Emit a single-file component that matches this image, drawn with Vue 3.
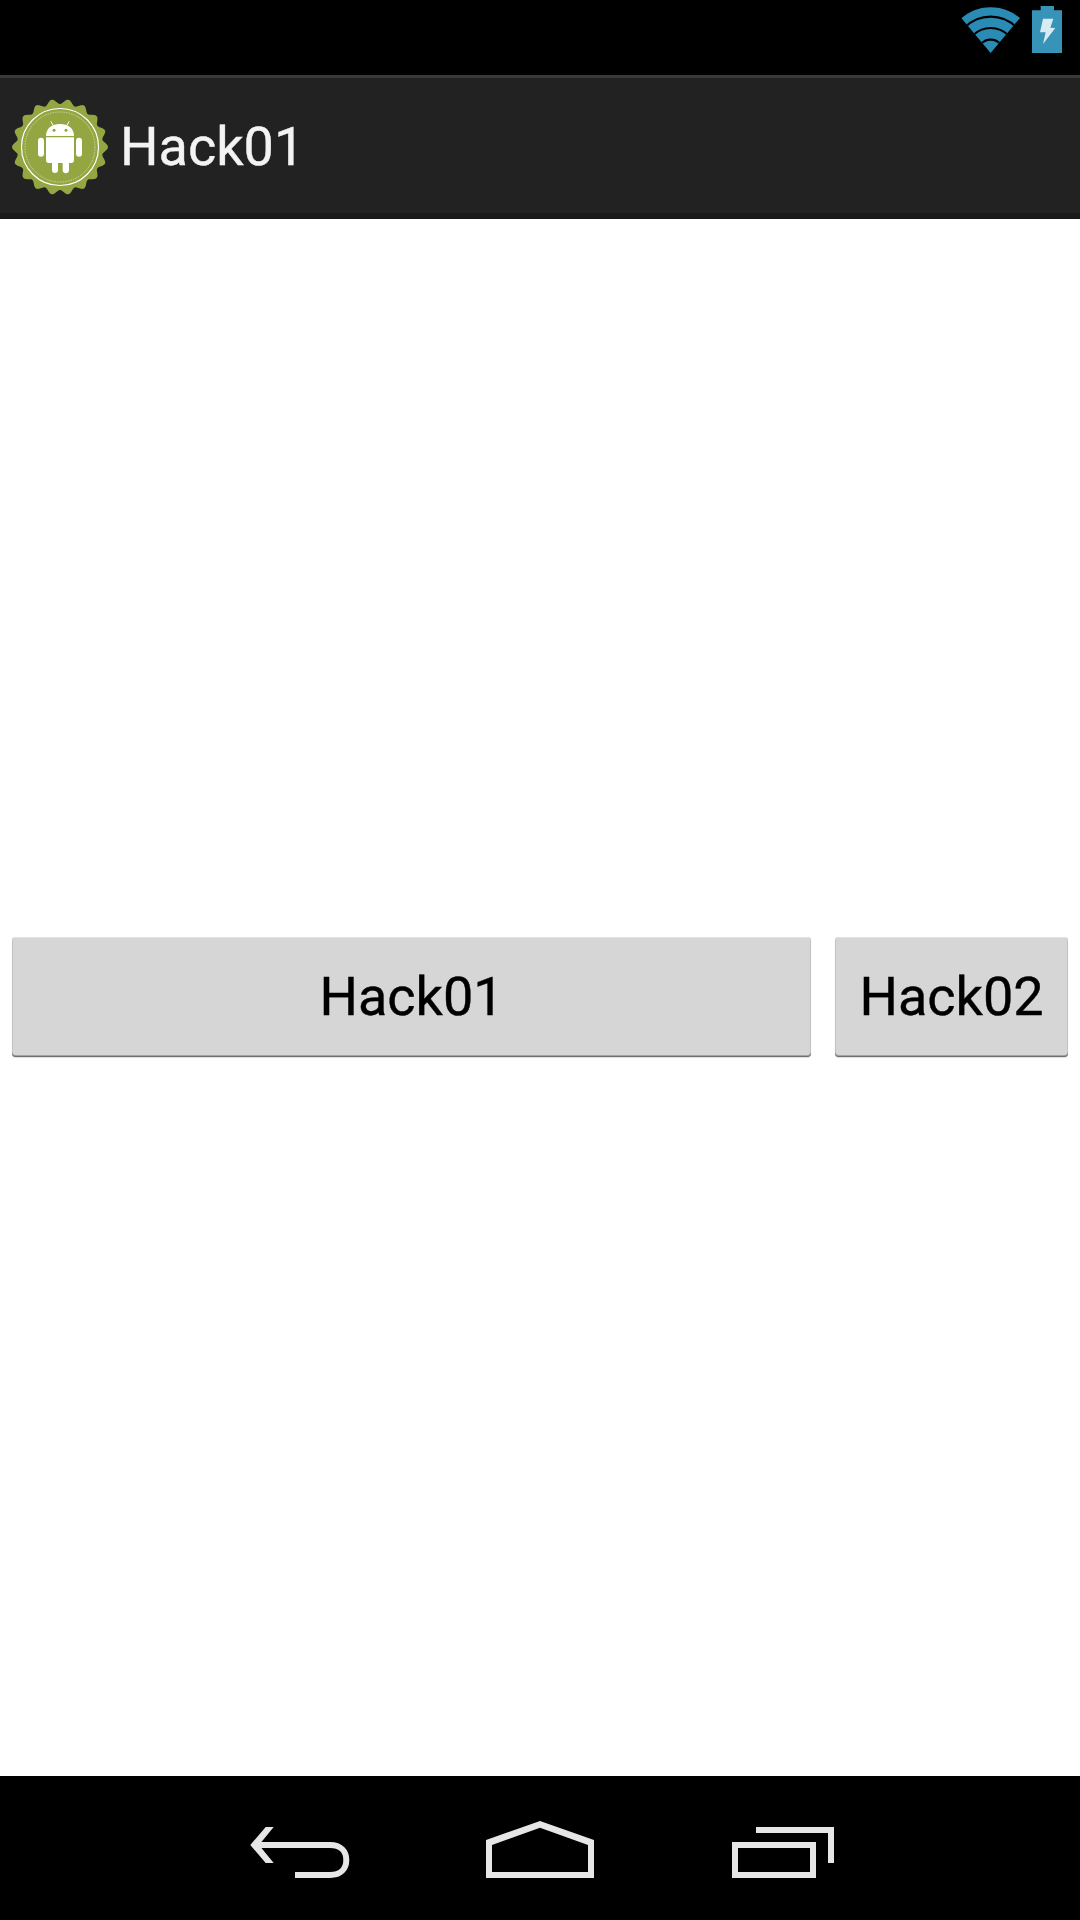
<script setup>
import { ref } from 'vue'

const title = ref('Hack01')
const buttons = [
  { label: 'Hack01', wide: true },
  { label: 'Hack02', wide: false },
]

// Scalloped edge of the launcher badge: 18 teeth around (144, 144)
const teeth = 18
const steps = teeth * 12
const badge =
  Array.from({ length: steps }, (_, i) => {
    const a = (i / steps) * Math.PI * 2
    const r = 136.5 + 7.5 * Math.cos(teeth * a)
    return `${i ? 'L' : 'M'}${(144 + r * Math.cos(a)).toFixed(2)} ${(144 + r * Math.sin(a)).toFixed(2)}`
  }).join('') + 'Z'
</script>

<template>
  <div class="screen">
    <header class="status">
      <svg class="wifi" viewBox="-2 0 180 138" width="60" height="46">
        <defs>
          <clipPath id="fan"><path d="M90 138L-8 21V0H188V21Z" /></clipPath>
        </defs>
        <g clip-path="url(#fan)">
          <circle cx="90" cy="138" r="137" fill="#2a8cb5" />
          <g fill="none" stroke="#000" stroke-width="6.5">
            <circle cx="90" cy="138" r="109" />
            <circle cx="90" cy="138" r="75" />
            <circle cx="90" cy="138" r="40" />
          </g>
        </g>
      </svg>
      <svg class="battery" viewBox="0 0 90 141" width="30" height="47">
        <path d="M26 0H66V13H90V141H0V13H26Z" fill="#3793b8" />
        <path d="M33 38H64L55 65L70 66L33 114L41 79H24Z" fill="#d9ebf2" />
      </svg>
    </header>

    <div class="action-bar">
      <svg class="launcher" viewBox="0 0 288 288" width="96" height="96">
        <path :d="badge" fill="#94a641" />
        <circle cx="144" cy="144" r="115.5" fill="none" stroke="#fff" stroke-width="3.6" />
        <circle cx="144" cy="144" r="105" fill="none" stroke="#dfe5c3" stroke-width="2" stroke-dasharray="5 3" />
        <g fill="#fff">
          <path d="M102 111C102 88 120 75 144 75S186 88 186 111Z" />
          <path d="M102 115H186V182Q186 192 176 192H171V213A9 9 0 0 1 152 213V192H138V213A9 9 0 0 1 120 213V192H112Q102 192 102 182Z" />
          <rect x="78" y="116" width="18" height="57" rx="9" />
          <rect x="192" y="116" width="18" height="57" rx="9" />
        </g>
        <path d="M117 68L125 82M171 68L163 82" stroke="#fff" stroke-width="3" stroke-linecap="round" />
        <circle cx="126" cy="94" r="4.5" fill="#94a641" />
        <circle cx="162" cy="94" r="4.5" fill="#94a641" />
      </svg>
      <h1 class="title">{{ title }}</h1>
    </div>

    <main class="content">
      <div class="row">
        <button v-for="b in buttons" :key="b.label" class="btn" :class="{ wide: b.wide }">{{ b.label }}</button>
      </div>
    </main>

    <nav class="nav">
      <svg viewBox="0 0 240 144" width="240" height="144">
        <path d="M77 69H150C161 69 166.300 75.500 166.300 84S161 99 150 99H115" fill="none" stroke="#e6e6e6" stroke-width="6" />
        <path d="M70.300 69L85.700 51H93.700L79 69L93.700 87H85.700Z" fill="#e6e6e6" />
      </svg>
      <svg viewBox="0 0 240 144" width="240" height="144">
        <path d="M66 64L120 45L174 64V102H66ZM72 69V96H168V69L120 51.800Z" fill="#e6e6e6" fill-rule="evenodd" />
      </svg>
      <svg viewBox="0 0 240 144" width="240" height="144">
        <path d="M75 69H153V99H75ZM96 54H171V87" fill="none" stroke="#e6e6e6" stroke-width="6" />
      </svg>
    </nav>
  </div>
</template>

<style>
body {
  margin: 0;
}
</style>

<style scoped>
.screen {
  display: flex;
  flex-direction: column;
  width: 1080px;
  height: 1920px;
  background: #fff;
  font-family: Roboto, sans-serif;
  overflow: hidden;
}

.screen svg {
  display: block;
  flex: none;
}

.status {
  display: flex;
  justify-content: flex-end;
  gap: 12px;
  box-sizing: border-box;
  height: 75px;
  padding: 6px 18px 0 0;
  background: #000;
}

.wifi {
  margin-top: 1px;
}

.action-bar {
  display: flex;
  align-items: center;
  box-sizing: border-box;
  height: 144px;
  padding: 3px 0 0 12px;
  background: #222;
  border-top: 3px solid #393939;
  border-bottom: 6px solid #1b1b1b;
}

.title {
  margin: 0 0 0 12px;
  font-size: 54px;
  font-weight: 400;
  line-height: 64px;
  color: #f3f3f3;
  -webkit-text-stroke: 0.4px currentColor;
}

.content {
  display: flex;
  flex: 1;
  align-items: center;
  padding-bottom: 1px;
  background: #fff;
}

.row {
  display: flex;
  gap: 24px;
  width: 100%;
  padding: 0 12px;
}

.btn {
  box-sizing: border-box;
  width: 233px;
  height: 120px;
  margin: 0;
  padding: 0;
  border: 0;
  border-radius: 4px;
  background: #d6d6d6;
  box-shadow: inset 0 -1px 0 #707070, inset 0 -2px 0 #a4a4a4, inset 0 1px 0 #e2e2e2, inset 1px 0 0 #c2c2c2, inset -1px 0 0 #c2c2c2, 0 1px 1px #ddd;
  font: 400 54px/64px Roboto, sans-serif;
  color: #000;
  -webkit-text-stroke: 0.4px currentColor;
}

.btn.wide {
  flex: 1;
}

.nav {
  display: flex;
  justify-content: center;
  height: 144px;
  background: #000;
}
</style>
